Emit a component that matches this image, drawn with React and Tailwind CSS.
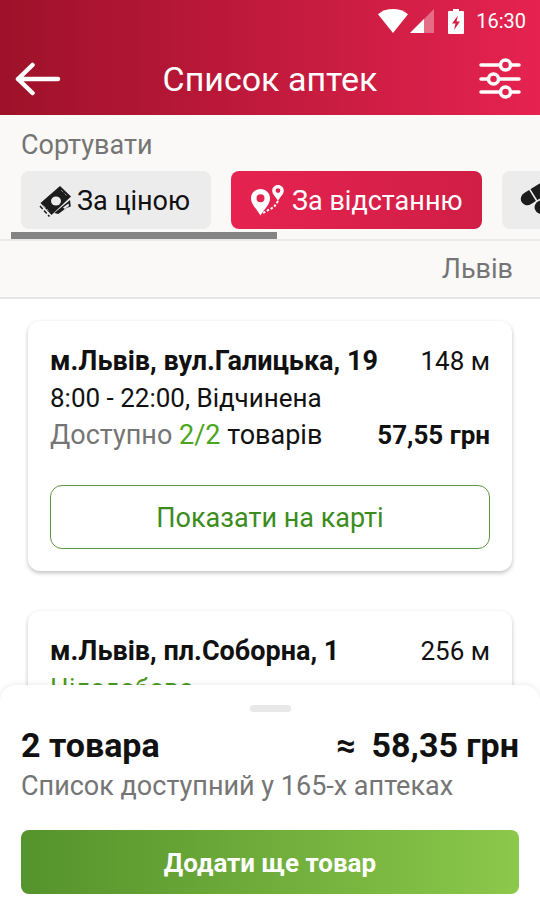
function WifiIcon() {
  return (
    <svg viewBox="0 0 30 24" className="h-6 w-[30px]" fill="currentColor" aria-hidden="true">
      <path d="M15 24 0 5.200C3.800 1.800 9 0 15 0s11.200 1.800 15 5.200z" />
    </svg>
  );
}

function SignalIcon() {
  return (
    <svg viewBox="0 0 24 24" className="size-6" fill="currentColor" aria-hidden="true">
      <path d="M0 24 24 0v24z" opacity=".35" />
      <path d="M0 24 14 10v14z" />
    </svg>
  );
}

function BatteryIcon() {
  return (
    <svg viewBox="0 0 16 25" className="h-[25px] w-4" aria-hidden="true">
      <path d="M5 0h6v2h4a1 1 0 0 1 1 1v21a1 1 0 0 1-1 1H1a1 1 0 0 1-1-1V3a1 1 0 0 1 1-1h4z" fill="currentColor" />
      <path d="M10 6.500 4 14.500h3.500L6 21l6-8.500H8.500z" fill="#d12046" />
    </svg>
  );
}

function BackIcon() {
  return (
    <svg viewBox="0 0 46 34" className="h-[34px] w-[46px]" fill="none" stroke="currentColor" strokeWidth="4.500" strokeLinecap="round" strokeLinejoin="round" aria-hidden="true">
      <path d="M43 17H3M17.500 3 3 17l14.500 14" />
    </svg>
  );
}

function FilterIcon() {
  return (
    <svg viewBox="0 0 42 42" className="size-[42px]" fill="none" stroke="currentColor" strokeWidth="3.500" strokeLinecap="round" aria-hidden="true">
      <path d="M2 7h19M32 7h8M2 21h7M20 21h20M2 34h19M32 34h8" />
      <circle cx="26.500" cy="7" r="5" />
      <circle cx="14.500" cy="21" r="5" />
      <circle cx="26.500" cy="34" r="5" />
    </svg>
  );
}

function MoneyIcon() {
  return (
    <svg viewBox="0 0 34 34" className="size-[34px]" aria-hidden="true">
      <path d="m31 16 .8 6.500-4.500 1.500-8 6-4-1z" fill="#1c1c1c" />
      <path d="m29.500 19.500-5.500 4 1.500 1.500 4.500-3z" fill="#ececec" />
      <path d="M1.500 19 21 2l11 10.500L12.500 31z" fill="#1c1c1c" />
      <path d="m4.500 21.500 5 5M22 6l6 6" stroke="#8a8a8a" strokeWidth="1" strokeDasharray="3 2" fill="none" />
      <ellipse cx="17" cy="17" rx="5" ry="4.500" fill="#ececec" />
      <path d="m1 22 9.500 10.500" stroke="#1c1c1c" strokeWidth="1.500" strokeDasharray="4 2" fill="none" />
    </svg>
  );
}

function RouteIcon() {
  return (
    <svg viewBox="0 0 33 32" className="h-8 w-[33px]" fill="currentColor" aria-hidden="true">
      <path fillRule="evenodd" d="M9.500 4C4.300 4 0 8 0 13.200 0 19.500 5.500 23.500 9.500 30.500c4-7 9.500-11 9.500-17.300C19 8 14.700 4 9.500 4zm0 5.200a4 4 0 1 1 0 8 4 4 0 0 1 0-8z" />
      <path fillRule="evenodd" d="M27 0c-3.300 0-5.800 2.500-5.800 5.600 0 3.800 3.600 6.300 5.800 10.400 2.200-4.100 5.800-6.600 5.800-10.400C32.800 2.500 30.300 0 27 0zm0 3.200a2.400 2.400 0 1 1 0 4.800 2.400 2.400 0 0 1 0-4.800z" />
      <path d="m27 16-4 6-12 6.500" fill="none" stroke="currentColor" strokeWidth="2" strokeDasharray="2.500 1.800" />
    </svg>
  );
}

function PillsIcon() {
  return (
    <svg viewBox="0 0 42 40" className="h-10 w-[42px] shrink-0 overflow-visible" aria-hidden="true">
      <g transform="rotate(-32 6 18)">
        <rect x="-1" y="11" width="33" height="13" rx="6.500" fill="#1c1c1c" />
        <path d="M12.500 10v15" stroke="#ececec" strokeWidth="1.500" />
      </g>
      <rect x="12" y="19" width="30" height="15" rx="7.500" fill="#1c1c1c" stroke="#ececec" strokeWidth="1.500" transform="rotate(25 20 26)" />
    </svg>
  );
}

function PharmacyCard({ address, distance, hours, alwaysOpen, available, price }) {
  return (
    <article className="rounded-xl bg-white p-[22px] text-[27px] leading-[37px] shadow-[0_2px_4px_0_rgba(0,0,0,0.25)]">
      <div className="flex justify-between gap-2 whitespace-nowrap">
        <h2 className="font-bold">{address}</h2>
        <span className="text-[26px]">{distance}</span>
      </div>
      <p className={alwaysOpen ? "text-[26px] text-[#489b20]" : "text-[26px]"}>{hours}</p>
      <div className="flex justify-between gap-2 whitespace-nowrap">
        <p>
          <span className="text-[#757575]">Доступно</span> <span className="text-[#4ba51e]">{available}</span> товарів
        </p>
        <strong className="text-[26px] font-bold">{price}</strong>
      </div>
      <button type="button" className="mt-[31px] h-16 w-full rounded-xl border border-[#5f9644] pt-0.5 text-[#3b8c1c]">
        Показати на карті
      </button>
    </article>
  );
}

export default function App() {
  return (
    <div className="flex h-screen flex-col overflow-hidden bg-white font-[Roboto,'Noto_Sans',sans-serif] text-[#111]">
      <header className="shrink-0 bg-linear-to-r from-[#9e1129] to-[#e62350] text-white">
        <div className="flex h-[42px] items-center justify-end pr-3.5">
          <WifiIcon />
          <span className="ml-0.5 flex"><SignalIcon /></span>
          <span className="ml-3.5 flex"><BatteryIcon /></span>
          <time className="ml-3 text-[20px]">16:30</time>
        </div>
        <div className="flex h-[73px] items-center justify-between px-[15px]">
          <button type="button" aria-label="Назад"><BackIcon /></button>
          <h1 className="pt-0.5 text-[34px]">Список аптек</h1>
          <button type="button" aria-label="Фільтри" className="mr-1"><FilterIcon /></button>
        </div>
      </header>

      <section className="shrink-0 overflow-hidden border-b-2 border-[#e9e9e8] bg-[#faf9f7]">
        <h2 className="mt-3 px-[21px] text-[27px] leading-9 text-[#757575]">Сортувати</h2>
        <div className="mt-2 flex gap-5 pl-[21px] text-[27px] whitespace-nowrap">
          <button type="button" className="flex h-[58px] w-[190px] shrink-0 items-center gap-1 rounded-lg bg-[#ececec] pt-0.5 pl-[18px]">
            <MoneyIcon />За ціною
          </button>
          <button type="button" aria-pressed="true" className="flex h-[58px] w-[251px] shrink-0 items-center gap-2 rounded-lg bg-linear-to-r from-[#e62350] to-[#d01e45] pt-0.5 pl-5 text-white">
            <RouteIcon />За відстанню
          </button>
          <button type="button" aria-label="За наявністю" className="flex h-[58px] w-[190px] shrink-0 items-center rounded-lg bg-[#ececec] pt-0.5 pl-5">
            <PillsIcon />
          </button>
        </div>
        <div className="mt-[3px] ml-[11px] h-[7px] w-[266px] bg-[#848484]" />
      </section>

      <div className="shrink-0 border-b-2 border-[#e6e6e6] bg-[#faf9f7] px-[27px] text-right text-[27px] leading-[56px] text-[#757575]">
        Львів
      </div>

      <main className="flex min-h-0 flex-1 flex-col gap-10 overflow-hidden px-7 pt-[22px]">
        <PharmacyCard address="м.Львів, вул.Галицька, 19" distance="148 м" hours="8:00 - 22:00, Відчинена" available="2/2" price="57,55 грн" />
        <PharmacyCard address="м.Львів, пл.Соборна, 1" distance="256 м" hours="Цілодобово" alwaysOpen available="2/2" price="58,35 грн" />
      </main>

      <footer className="relative z-10 -mt-3 shrink-0 rounded-t-2xl bg-white px-[21px] pt-5 pb-1.5 shadow-[0_0_6px_rgba(0,0,0,0.1)]">
        <div className="mx-auto h-[7px] w-[41px] rounded-sm bg-[#e8e8e8]" />
        <div className="mt-3 flex justify-between text-[34px] leading-[42px] font-bold whitespace-nowrap">
          <span>2 товара</span>
          <span className="flex gap-4"><span>≈</span>58,35 грн</span>
        </div>
        <p className="text-[27px] leading-10 text-[#757575]">Список доступний у 165-х аптеках</p>
        <button type="button" className="mt-6 h-16 w-full rounded-lg bg-linear-to-r from-[#55932c] to-[#8bc84b] pt-0.5 text-[26px] font-bold text-white">
          Додати ще товар
        </button>
      </footer>
    </div>
  );
}
